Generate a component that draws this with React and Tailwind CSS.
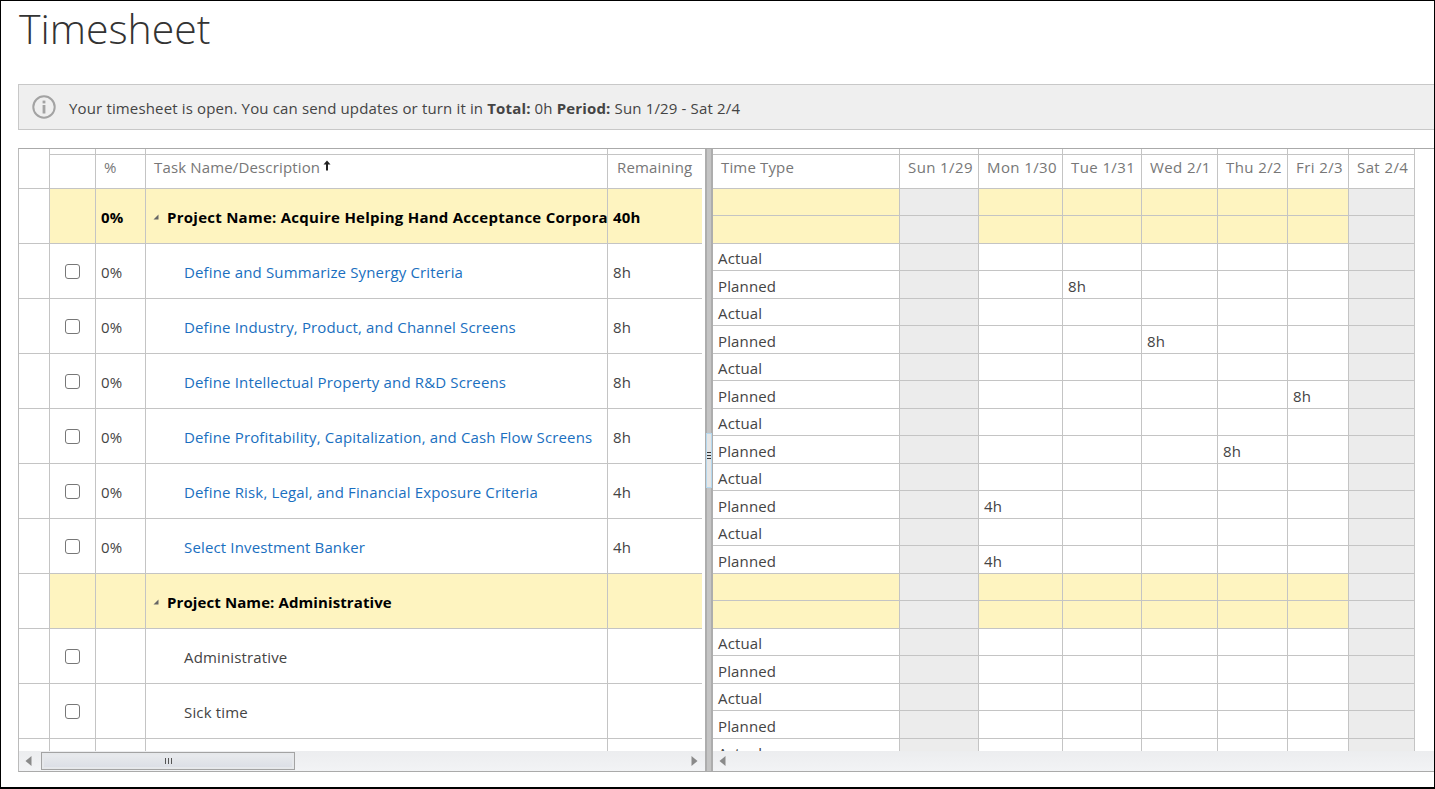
const FONT = "font-['Open_Sans','Noto_Sans',sans-serif]";

const rows = [
  { type: 'project', pct: '0%', name: 'Project Name: Acquire Helping Hand Acceptance Corporation', rem: '40h', nameClass: 'tracking-[0.26px]' },
  { pct: '0%', name: 'Define and Summarize Synergy Criteria', rem: '8h', link: true, day: 2, hrs: '8h' },
  { pct: '0%', name: 'Define Industry, Product, and Channel Screens', rem: '8h', link: true, day: 3, hrs: '8h' },
  { pct: '0%', name: 'Define Intellectual Property and R&D Screens', rem: '8h', link: true, day: 5, hrs: '8h' },
  { pct: '0%', name: 'Define Profitability, Capitalization, and Cash Flow Screens', rem: '8h', link: true, day: 4, hrs: '8h' },
  { pct: '0%', name: 'Define Risk, Legal, and Financial Exposure Criteria', rem: '4h', link: true, day: 1, hrs: '4h' },
  { pct: '0%', name: 'Select Investment Banker', rem: '4h', link: true, day: 1, hrs: '4h' },
  { type: 'project', pct: '', name: 'Project Name: Administrative', rem: '', nameClass: 'tracking-[0.1px]' },
  { pct: '', name: 'Administrative', rem: '' },
  { pct: '', name: 'Sick time', rem: '' },
  { pct: '', name: '', rem: '' },
];

const days = [
  { label: 'Sun 1/29', w: 'w-[79px]', off: true },
  { label: 'Mon 1/30', w: 'w-[84px]' },
  { label: 'Tue 1/31', w: 'w-[79px]' },
  { label: 'Wed 2/1', w: 'w-[76px]' },
  { label: 'Thu 2/2', w: 'w-[70px]' },
  { label: 'Fri 2/3', w: 'w-[61px]' },
  { label: 'Sat 2/4', w: 'w-[66px]', off: true },
];

const InfoIcon = () => (
  <svg width="24" height="24" viewBox="0 0 24 24" fill="none" className="shrink-0">
    <circle cx="12" cy="12" r="10.7" stroke="#a3a3a3" strokeWidth="2" />
    <rect x="10.6" y="10" width="2.8" height="8.5" fill="#a3a3a3" />
    <rect x="10.6" y="5.6" width="2.8" height="2.8" fill="#a3a3a3" />
  </svg>
);

const SortArrow = () => (
  <svg width="8" height="11" viewBox="0 0 8 11" className="ml-[3px] mb-[3px]">
    <path d="M4 0.5 L7.5 4.5 H5 V10.5 H3 V4.5 H0.5 Z" fill="#222" />
  </svg>
);

const LeftRow = ({ row }) => {
  const isProject = row.type === 'project';
  return (
    <div className="flex h-[55px] border-b border-[#c4c4c4]">
      <div className="w-[31px] border-r border-[#c4c4c4] bg-white" />
      <div className={`w-[46px] border-r border-[#c4c4c4] flex items-center justify-center ${isProject ? 'bg-[#fef4c0]' : ''}`}>
        {!isProject && row.name && (
          <span className="block w-[15px] h-[15px] rounded-[3px] border-[1.5px] border-[#777] bg-white" />
        )}
      </div>
      <div className={`w-[50px] border-r border-[#c4c4c4] flex items-center pl-[5px] pt-[2px] ${isProject ? 'bg-[#fef4c0] font-bold text-black' : ''}`}>
        {row.pct}
      </div>
      <div className={`w-[462px] border-r border-[#c4c4c4] flex items-center overflow-hidden whitespace-nowrap pt-[2px] ${isProject ? 'bg-[#fef4c0] font-bold text-black pl-[7px]' : 'pl-[38px]'}`}>
        {isProject && (
          <svg width="6" height="6" viewBox="0 0 6 6" className="mr-[8px] shrink-0">
            <path d="M5.5 0.5 V5.5 H0.5 Z" fill="#666" />
          </svg>
        )}
        <span className={`${row.link ? 'text-[#1a6fc0]' : ''} ${row.nameClass || ''}`}>{row.name}</span>
      </div>
      <div className={`w-[94px] flex items-center pl-[5px] pt-[2px] ${isProject ? 'bg-[#fef4c0] font-bold text-black' : ''}`}>
        {row.rem}
      </div>
    </div>
  );
};

const SubRow = ({ label, height, pad, yellow, row, showHours }) => (
  <div className={`flex w-fit ${height} border-b border-[#c4c4c4]`}>
    <div className={`w-[187px] border-r border-[#c4c4c4] pl-[5px] flex items-center ${pad} ${yellow ? 'bg-[#fef4c0]' : ''}`}>
      {label}
    </div>
    {days.map((d, i) => (
      <div
        key={d.label}
        className={`${d.w} border-r border-[#c4c4c4] pl-[5px] flex items-center ${pad} ${d.off ? 'bg-[#ececec]' : yellow ? 'bg-[#fef4c0]' : ''}`}
      >
        {showHours && row.day === i ? row.hrs : ''}
      </div>
    ))}
  </div>
);

const RightRow = ({ row }) => {
  const isProject = row.type === 'project';
  return (
    <div className="flex flex-col">
      <SubRow label={isProject ? '' : 'Actual'} height="h-[27px]" pad="pt-[2px]" yellow={isProject} row={row} />
      <SubRow label={isProject ? '' : 'Planned'} height="h-[28px]" pad="pt-[4px]" yellow={isProject} row={row} showHours />
    </div>
  );
};

const Arrow = ({ dir }) => (
  <svg width="7" height="10" viewBox="0 0 7 10">
    <path d={dir === 'left' ? 'M6.5 0 V10 L0.5 5 Z' : 'M0.5 0 V10 L6.5 5 Z'} fill="#8a8a8a" />
  </svg>
);

export default function App() {
  return (
    <div className={`${FONT} h-[789px] w-full overflow-hidden bg-white border-l border-t border-r border-b-2 border-black text-[15px] tracking-[0.15px] text-[#444] flex flex-col`}>
      <h1 className="h-[83px] pl-[18px] text-[41px] tracking-normal leading-[54px] font-light text-[#333] shrink-0">Timesheet</h1>

      <div className="ml-[17px] h-[46px] shrink-0 flex items-center pl-[13px] bg-[#efefef] border border-r-0 border-[#c8c8c8]">
        <InfoIcon />
        <p className="ml-[13px] pt-[2px] whitespace-nowrap">
          Your timesheet is open. You can send updates or turn it in <b>Total:</b> 0h <b>Period:</b> Sun 1/29 - Sat 2/4
        </p>
      </div>

      {/* Grid */}
      <div className="ml-[17px] mt-[18px] h-[624px] shrink-0 flex border-t border-b border-l border-t-[#aaa] border-b-[#aaa] border-l-[#bbb]">
        {/* Left pane */}
        <div className="w-[686px] shrink-0 flex flex-col">
          <div className="h-[602px] overflow-hidden">
            <div className="w-[683px]">
              <div className="flex h-[40px] border-b border-[#c4c4c4] text-[#777]">
                <div className="w-[31px] border-r border-[#c4c4c4]" />
                <div className="w-[46px] border-r border-[#c4c4c4]">
                  <div className="h-[6px] border-b border-[#c4c4c4]" />
                </div>
                <div className="w-[50px] border-r border-[#c4c4c4]">
                  <div className="h-[6px] border-b border-[#c4c4c4]" />
                  <div className="pl-[8px] pt-[1px]">%</div>
                </div>
                <div className="w-[462px] border-r border-[#c4c4c4]">
                  <div className="h-[6px] border-b border-[#c4c4c4]" />
                  <div className="pl-[8px] pt-[1px] flex items-center">
                    Task Name/Description
                    <SortArrow />
                  </div>
                </div>
                <div className="w-[94px]">
                  <div className="h-[6px] border-b border-[#c4c4c4]" />
                  <div className="pl-[9px] pt-[1px]">Remaining</div>
                </div>
              </div>
              {rows.map((row, i) => (
                <LeftRow key={i} row={row} />
              ))}
            </div>
          </div>
          <div className="h-[20px] flex items-center justify-between bg-linear-to-b from-[#ecedef] to-[#f2f3f5] pl-[6px] pr-[7px] relative">
            <Arrow dir="left" />
            <div className="absolute left-[22px] top-[1px] w-[254px] h-[18px] border border-[#a3a3a3] bg-[#e6e8eb] p-[2px]">
              <div className="h-full bg-linear-to-b from-[#e8eaed] to-[#dcdfe6] flex items-center justify-center gap-[2px]">
                <span className="w-px h-[6px] bg-[#555]" />
                <span className="w-px h-[6px] bg-[#555]" />
                <span className="w-px h-[6px] bg-[#555]" />
              </div>
            </div>
            <Arrow dir="right" />
          </div>
        </div>

        {/* Splitter */}
        <div className="w-[8px] shrink-0 bg-[#c4c4c4] border-x-2 border-[#adadad] relative">
          <div className="absolute -left-[1px] top-[284px] w-[6px] h-[55px] bg-[#e6e6e6] border border-[#b5d8ee] flex items-center justify-center">
            <div className="flex flex-col gap-[2px] mb-[10px]">
              <span className="block w-[4px] h-px bg-[#333]" />
              <span className="block w-[4px] h-px bg-[#333]" />
              <span className="block w-[4px] h-px bg-[#333]" />
            </div>
          </div>
        </div>

        {/* Right pane */}
        <div className="flex-1 min-w-0 flex flex-col">
          <div className="h-[602px] overflow-hidden">
            <div className="flex h-[40px] w-fit border-b border-[#c4c4c4] text-[#777]">
              <div className="w-[187px] border-r border-[#c4c4c4]">
                <div className="h-[6px] border-b border-[#c4c4c4]" />
                <div className="pl-[8px] pt-[1px]">Time Type</div>
              </div>
              {days.map(d => (
                <div key={d.label} className={`${d.w} border-r border-[#c4c4c4] whitespace-nowrap`}>
                  <div className="h-[6px] border-b border-[#c4c4c4]" />
                  <div className="pl-[8px] pt-[1px] tracking-[0.4px]">{d.label}</div>
                </div>
              ))}
            </div>
            {rows.map((row, i) => (
              <RightRow key={i} row={row} />
            ))}
          </div>
          <div className="h-[20px] flex items-center bg-linear-to-b from-[#ecedef] to-[#f2f3f5] pl-[6px]">
            <Arrow dir="left" />
          </div>
        </div>
      </div>
    </div>
  );
}
